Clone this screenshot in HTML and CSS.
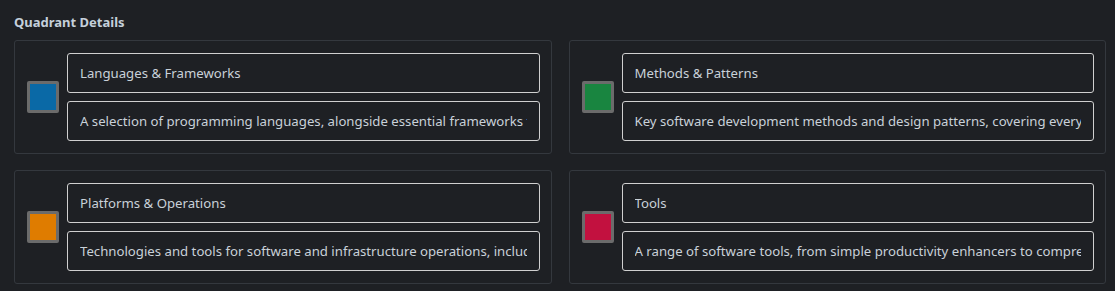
FILE: index.html
```html
<!DOCTYPE html>
<html lang="en">
<head>
<meta charset="UTF-8">
<meta name="viewport" content="width=device-width, initial-scale=1.0">
<title>Quadrant Details</title>
<link rel="stylesheet" href="styles.css">
</head>
<body>

<div class="seccion">
  <div class="titulo">Quadrant Details</div>
  <div class="rejilla">
    <div class="tarjeta">
      <div class="muestra"><div class="color azul"></div></div>
      <div class="campos">
        <input class="campo" type="text" value="Languages &amp; Frameworks">
        <input class="campo" type="text" value="A selection of programming languages, alongside essential frameworks for building a variety of software.">
      </div>
    </div>
    <div class="tarjeta">
      <div class="muestra"><div class="color verde"></div></div>
      <div class="campos">
        <input class="campo" type="text" value="Methods &amp; Patterns">
        <input class="campo" type="text" value="Key software development methods and design patterns, covering everything from architecture to testing.">
      </div>
    </div>
    <div class="tarjeta">
      <div class="muestra"><div class="color naranja"></div></div>
      <div class="campos">
        <input class="campo" type="text" value="Platforms &amp; Operations">
        <input class="campo" type="text" value="Technologies and tools for software and infrastructure operations, including platforms and services.">
      </div>
    </div>
    <div class="tarjeta">
      <div class="muestra"><div class="color rojo"></div></div>
      <div class="campos">
        <input class="campo" type="text" value="Tools">
        <input class="campo" type="text" value="A range of software tools, from simple productivity enhancers to comprehensive project solutions.">
      </div>
    </div>
  </div>
</div>

</body>
</html>
```

FILE: styles.css
```css
body {
  margin: 0;
  padding: 0;
  background-color: #1e2024;
  font-family: "Noto Sans", "Open Sans", sans-serif;
  color: #c9d1d9;
}

.seccion {
  padding: 13px 9px 8px 14px;
}

.titulo {
  font-size: 13px;
  font-weight: bold;
  color: #c5d0db;
  line-height: 18px;
  margin-bottom: 9px;
}

.rejilla {
  display: grid;
  grid-template-columns: 1fr 1fr;
  column-gap: 17px;
  row-gap: 16px;
}

.tarjeta {
  display: flex;
  align-items: center;
  gap: 8px;
  padding: 12px 11px 12px 12px;
  border: 1px solid #34383e;
  border-radius: 3px;
}

.muestra {
  flex: none;
  width: 32px;
  height: 32px;
  box-sizing: border-box;
  border: 3px solid #6b6b6b;
  border-radius: 2px;
  background-color: #6b6b6b;
}

.color {
  width: 100%;
  height: 100%;
}

.azul { background-color: #0a69a6; }
.verde { background-color: #198540; }
.naranja { background-color: #df7c00; }
.rojo { background-color: #c2113f; }

.campos {
  flex: 1;
  display: flex;
  flex-direction: column;
  gap: 8px;
}

.campo {
  box-sizing: border-box;
  height: 40px;
  width: 100%;
  padding: 0 12px;
  font-family: inherit;
  font-size: 13.2px;
  color: #c9d1d9;
  background-color: #1e2024;
  border: 1px solid #d0d0d0;
  border-radius: 3px;
  outline: none;
}
```
